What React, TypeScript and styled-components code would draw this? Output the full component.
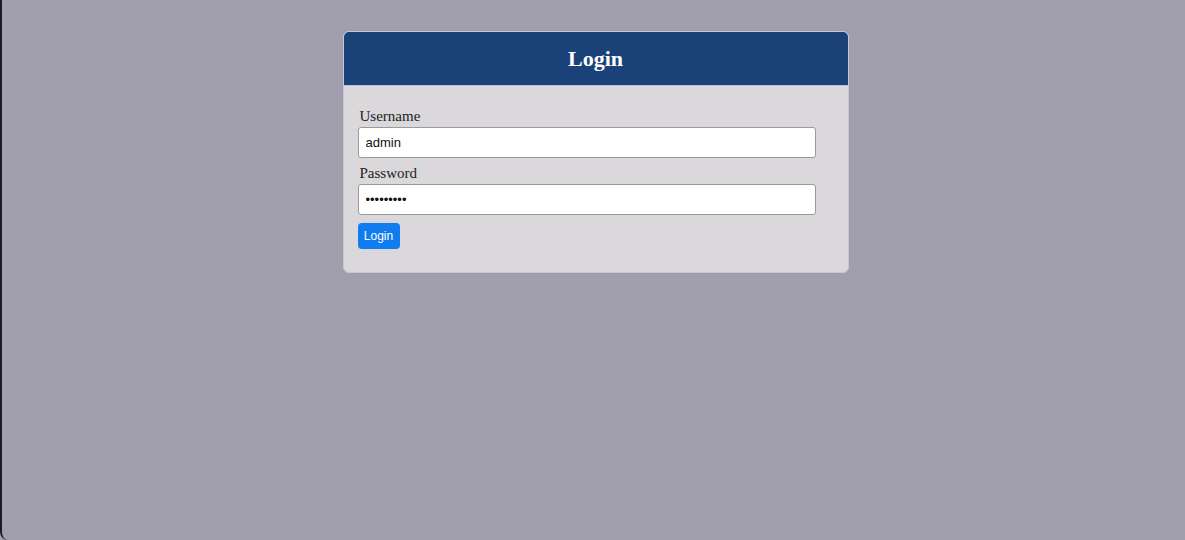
import { FC } from 'react';
import styled, { createGlobalStyle } from 'styled-components';

const GlobalStyle = createGlobalStyle`
  html, body {
    margin: 0;
    padding: 0;
    background: #a19fae;
  }
`;

const Page = styled.div`
  min-height: 540px;
  box-sizing: border-box;
  border-left: 2px solid #1c1b2a;
  border-bottom-left-radius: 8px;
  padding: 31px 0 0 4px;
  background: #a19fae;
  font-family: 'Liberation Serif', 'Times New Roman', serif;
`;

const Card = styled.div`
  width: 506px;
  margin: 0 auto;
  box-sizing: border-box;
  border: 1px solid #c3c8d8;
  border-radius: 6px;
  background: #dad8db;
  overflow: hidden;
`;

const Header = styled.div`
  height: 53px;
  display: flex;
  align-items: center;
  justify-content: center;
  background: #1b4179;
  border-bottom: 1px solid #b9c6de;
`;

const Title = styled.h2`
  margin: 0;
  color: #ffffff;
  font-size: 22px;
  font-weight: bold;
`;

const Form = styled.form`
  display: flex;
  flex-direction: column;
  align-items: flex-start;
  padding: 21px 14px 23px;
`;

const Label = styled.label`
  margin: 0 0 2px 2px;
  font-size: 15px;
  line-height: 18px;
  color: #222222;
`;

const Input = styled.input`
  width: 458px;
  height: 31px;
  box-sizing: border-box;
  margin-bottom: 6px;
  padding: 0 7px;
  border: 1px solid #9a9a9a;
  border-radius: 3px;
  background: #ffffff;
  font-family: 'Liberation Sans', Arial, sans-serif;
  font-size: 13px;
  color: #111111;
  outline: none;
`;

const Button = styled.button`
  margin-top: 2px;
  width: 42px;
  height: 26px;
  padding: 0;
  border: none;
  border-radius: 4px;
  background: #0f7cf0;
  color: #ffffff;
  font-family: 'Liberation Sans', Arial, sans-serif;
  font-size: 12px;
  cursor: pointer;
`;

const App: FC = () => (
  <>
    <GlobalStyle />
    <Page>
      <Card>
        <Header>
          <Title>Login</Title>
        </Header>
        <Form onSubmit={(e) => e.preventDefault()}>
          <Label htmlFor="username">Username</Label>
          <Input id="username" type="text" defaultValue="admin" />
          <Label htmlFor="password">Password</Label>
          <Input id="password" type="password" defaultValue="123456789" />
          <Button type="submit">Login</Button>
        </Form>
      </Card>
    </Page>
  </>
);

export default App;
